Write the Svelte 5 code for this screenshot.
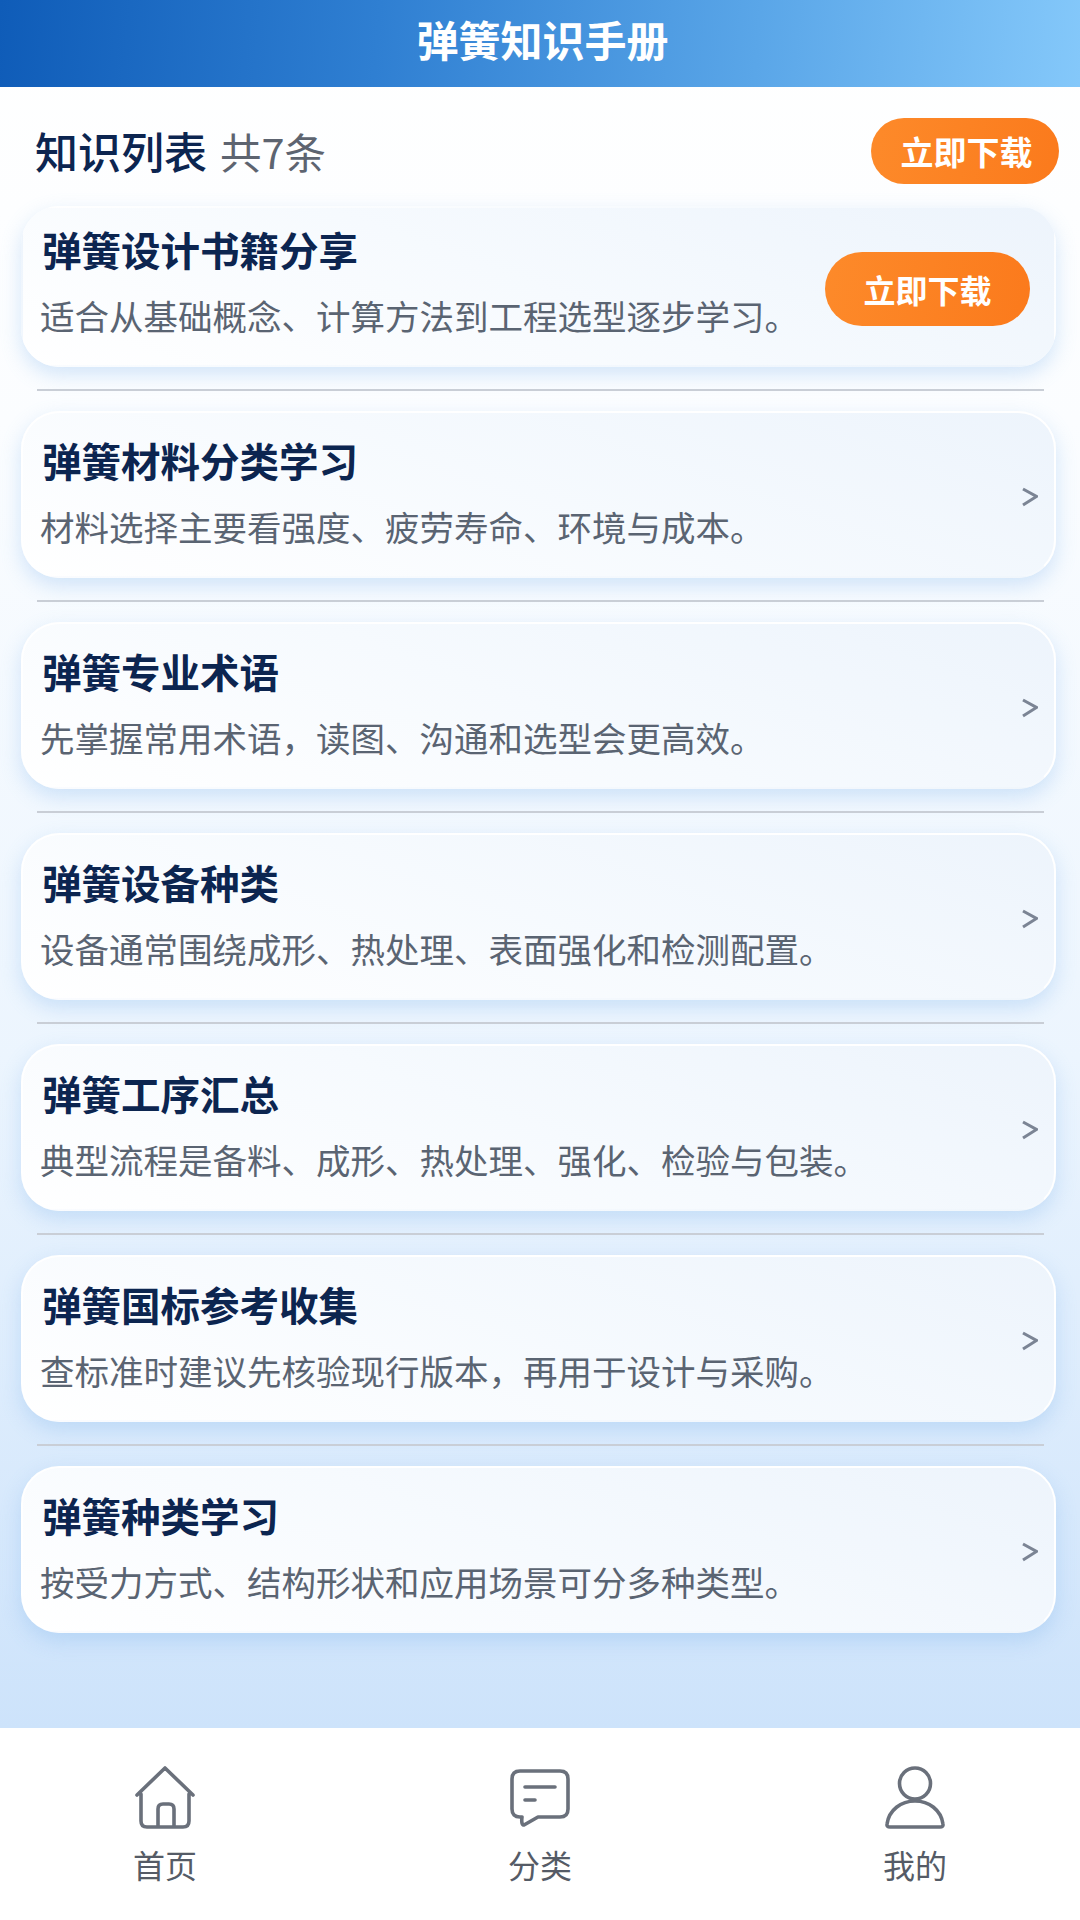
<script>
	const items = [
		{ title: '弹簧设计书籍分享', desc: '适合从基础概念、计算方法到工程选型逐步学习。', download: true },
		{ title: '弹簧材料分类学习', desc: '材料选择主要看强度、疲劳寿命、环境与成本。' },
		{ title: '弹簧专业术语', desc: '先掌握常用术语，读图、沟通和选型会更高效。' },
		{ title: '弹簧设备种类', desc: '设备通常围绕成形、热处理、表面强化和检测配置。' },
		{ title: '弹簧工序汇总', desc: '典型流程是备料、成形、热处理、强化、检验与包装。' },
		{ title: '弹簧国标参考收集', desc: '查标准时建议先核验现行版本，再用于设计与采购。' },
		{ title: '弹簧种类学习', desc: '按受力方式、结构形状和应用场景可分多种类型。' }
	];
</script>

<div class="page">
	<header class="topbar">弹簧知识手册</header>

	<main class="content">
		<div class="list-head">
			<div class="heading">
				<h2>知识列表</h2>
				<span>共7条</span>
			</div>
			<button class="dl small" type="button">立即下载</button>
		</div>

		<ul class="list">
			{#each items as item, i}
				{#if i > 0}
					<li class="rule" aria-hidden="true"></li>
				{/if}
				<li class="card" class:first={item.download}>
					<div class="text">
						<h3>{item.title}</h3>
						<p>{item.desc}</p>
					</div>
					{#if item.download}
						<button class="dl" type="button">立即下载</button>
					{:else}
						<svg class="chev" viewBox="0 0 16 20" width="16" height="20">
							<path d="M1 2 L14.5 9.5 L1 18" fill="none" stroke="#7b8494" stroke-width="3" />
						</svg>
					{/if}
				</li>
			{/each}
		</ul>
	</main>

	<nav class="tabs">
		<div class="tab">
			<svg viewBox="0 0 64 64" width="64" height="64">
				<path d="M4 30 L32 3 L60 30 M8 29 V56 Q8 62 14 62 H50 Q56 62 56 56 V29 M25 62 V44 Q25 39 30 39 H36 Q41 39 41 44 V62" />
			</svg>
			<span>首页</span>
		</div>
		<div class="tab">
			<svg viewBox="0 0 64 64" width="64" height="64">
				<path d="M12 6 H52 Q60 6 60 14 V44 Q60 52 52 52 H30 L16 60 Q13 60 14 52 H12 Q4 52 4 44 V14 Q4 6 12 6 Z" />
				<path d="M17 22 H47 M17 35 H27" />
			</svg>
			<span>分类</span>
		</div>
		<div class="tab">
			<svg viewBox="0 0 64 64" width="64" height="64">
				<circle cx="32" cy="18.5" r="15.5" />
				<path d="M7 62 H57 Q60.5 62 60 59 C58 45 46 36 32 36 C18 36 6 45 4 59 Q3.5 62 7 62 Z" />
			</svg>
			<span>我的</span>
		</div>
	</nav>
</div>

<style>
	:global(body) {
		margin: 0;
	}

	.page {
		display: flex;
		flex-direction: column;
		width: 1080px;
		height: 1920px;
		overflow: hidden;
		font-family: 'Noto Sans CJK SC', 'Noto Sans', sans-serif;
		background: linear-gradient(180deg, #ffffff 0%, #fbfdff 22%, #ecf5fe 55%, #cde3fb 90%);
	}

	.topbar {
		height: 87px;
		flex: none;
		box-sizing: border-box;
		padding: 0 0 11px 5px;
		display: flex;
		align-items: center;
		justify-content: center;
		color: #fff;
		font-size: 42px;
		font-weight: 700;
		background: linear-gradient(95deg, #0f5cb8 0%, #2f7fd2 35%, #5aa6e8 70%, #84c8fa 100%);
	}

	.content {
		flex: 1;
		min-height: 0;
	}

	.list-head {
		display: flex;
		align-items: center;
		justify-content: space-between;
		padding: 31px 21px 0 35px;
	}

	.heading {
		display: flex;
		align-items: baseline;
		gap: 13px;
		margin-top: -2px;
	}

	h2 {
		margin: 0;
		font-size: 43px;
		font-weight: 500;
		color: #0c2550;
	}

	.heading span {
		font-size: 41.5px;
		color: #5d6470;
	}

	.dl {
		flex: none;
		width: 205px;
		height: 74px;
		padding: 0;
		border: 0;
		border-radius: 37px;
		color: #fff;
		font-family: inherit;
		font-size: 32px;
		font-weight: 700;
		background: linear-gradient(100deg, #fd8a2a, #fb7a1c);
	}

	.dl.small {
		width: 188px;
		height: 66px;
		padding-left: 3px;
		border-radius: 33px;
		font-size: 33px;
	}

	.list {
		list-style: none;
		margin: 22px 0 0;
		padding: 0 24px 0 21px;
	}

	.rule {
		height: 2px;
		margin: 22px 12px 20px 16px;
		background: #c9ced6;
	}

	.card {
		box-sizing: border-box;
		height: 167px;
		display: flex;
		align-items: center;
		justify-content: space-between;
		padding: 0 16px 0 17px;
		border: 2px solid #fff;
		border-bottom-color: rgba(255, 255, 255, 0.2);
		border-radius: 38px;
		background: linear-gradient(200deg, #edf4fc 0%, #f6fafe 50%, #ffffff 100%);
		box-shadow: 0 8px 20px rgba(120, 175, 235, 0.3);
	}

	.card .text {
		margin-bottom: 7px;
	}

	.card.first {
		height: 161px;
		padding-right: 24px;
		border-color: transparent;
	}

	.card.first .text {
		margin: -13px 0 0;
	}

	.card.first .dl {
		margin-top: 5px;
	}

	h3 {
		margin: 0 0 0 2px;
		font-size: 39.5px;
		line-height: 54px;
		font-weight: 700;
		color: #0c2550;
	}

	.card p {
		margin: 16px 0 0;
		font-size: 34.5px;
		line-height: 46px;
		color: #5a6472;
	}

	.chev {
		margin-top: 4px;
	}

	.tabs {
		flex: none;
		height: 192px;
		box-sizing: border-box;
		padding-top: 37px;
		display: grid;
		grid-template-columns: repeat(3, 375px);
		justify-content: center;
		background: #fff;
	}

	.tab {
		display: flex;
		flex-direction: column;
		align-items: center;
		color: #555b66;
		font-size: 32px;
		line-height: 46px;
	}

	.tab span {
		margin-top: 12px;
	}

	.tab svg {
		fill: none;
		stroke: #6a707b;
		stroke-width: 3.6;
		stroke-linecap: round;
		stroke-linejoin: round;
	}
</style>
